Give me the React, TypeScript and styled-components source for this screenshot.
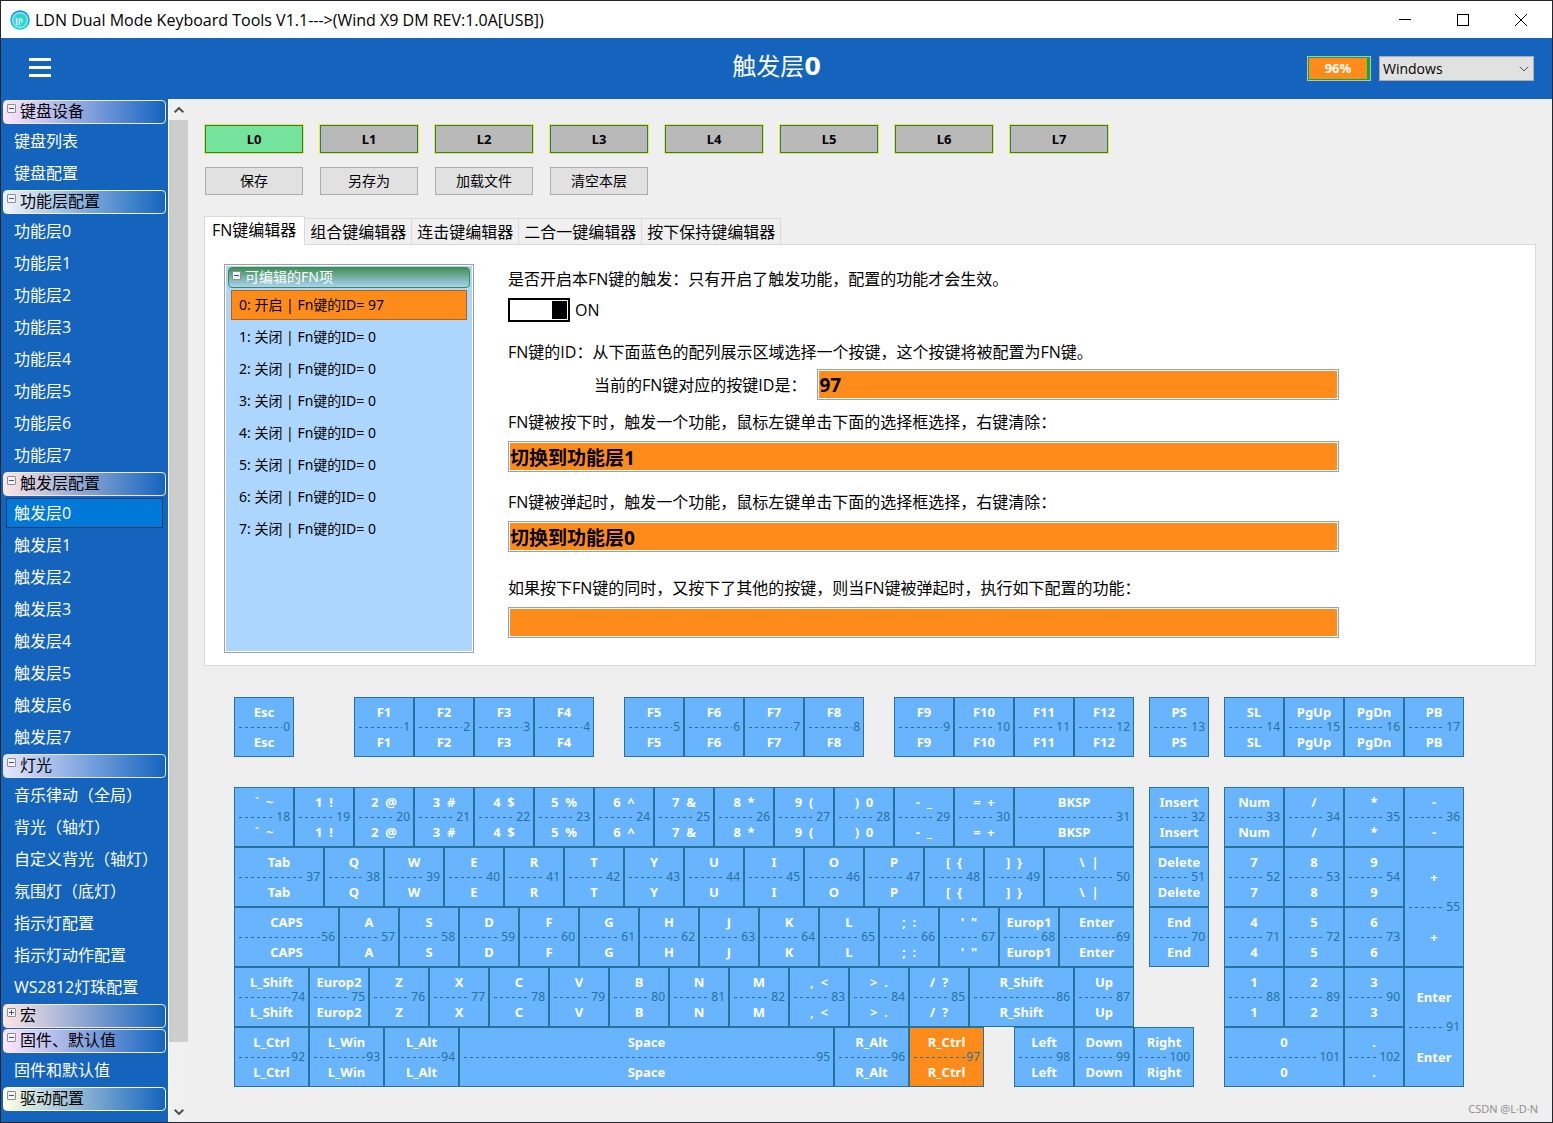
import React, { useState } from "react";
import styled, { createGlobalStyle, css } from "styled-components";

const uiFont = `"Open Sans", "Noto Sans CJK SC", sans-serif`;
const keyFont = `"Noto Sans", "Noto Sans CJK SC", sans-serif`;

const color = {
  blue: "#1464be",
  orange: "#ff8c1a",
  key: "#69b4ff",
  teal: "#23739b",
  face: "#efefef",
};

const GlobalStyle = createGlobalStyle`
  *, *::before, *::after { box-sizing: border-box; }
  body { margin: 0; font: 16px/24px ${uiFont}; color: #000; background: #25252b; }
  button, input, select { font: inherit; color: inherit; margin: 0; border-radius: 0; }
  button { cursor: pointer; padding: 0; }
  ul { list-style: none; margin: 0; padding: 0; }
  p, h1 { margin: 0; }
`;

const Window = styled.div`
  display: flex;
  flex-direction: column;
  height: 100vh;
  border: 1px solid #25252b;
  background: ${color.face};
  overflow: hidden;
`;

const TitleBar = styled.header`
  display: flex;
  align-items: center;
  flex: none;
  height: 37px;
  padding-left: 9px;
  background: #fff;
`;

const WindowTitle = styled.span`
  flex: 1;
  margin-left: 5px;
  font-size: 16px;
  white-space: nowrap;
`;

const WindowButton = styled.button`
  display: grid;
  place-items: center;
  width: 58px;
  height: 36px;
  border: 0;
  background: none;
`;

const WindowButtons = styled.div`
  display: flex;
  padding-right: 2px;
`;

const Toolbar = styled.div`
  display: grid;
  grid-template-columns: 1fr auto 1fr;
  align-items: center;
  flex: none;
  height: 61px;
  padding: 0 18px;
  background: ${color.blue};
  color: #fff;
`;

const MenuButton = styled.button`
  display: flex;
  flex-direction: column;
  gap: 5px;
  width: 22px;
  margin-left: 10px;
  padding-bottom: 2px;
  border: 0;
  background: none;
`;

const MenuBar = styled.span`
  height: 3px;
  background: #fff;
`;

const PageTitle = styled.h1`
  padding-bottom: 4px;
  font-size: 24px;
  line-height: 32px;
  font-weight: 400;

  b {
    font-family: "DejaVu Sans", sans-serif;
    font-weight: 700;
  }
`;

const ToolbarEnd = styled.div`
  display: flex;
  justify-content: flex-end;
  gap: 8px;
`;

const Battery = styled.div`
  width: 64px;
  height: 25px;
  padding: 1px 0 1px 1px;
  border: 1px solid #bcbcbc;
  background: #06b025;
`;

const BatteryLevel = styled.div`
  width: 58px;
  height: 21px;
  background: ${color.orange};
  font: 700 13px/21px ${keyFont};
  text-align: center;
`;

const SelectBox = styled.div`
  display: grid;
  align-items: center;
  width: 155px;
  height: 25px;
  border: 1px solid #adadad;
  background: #e1e1e1;
  color: #000;

  > * { grid-area: 1 / 1; }

  svg {
    justify-self: end;
    margin-right: 4px;
    pointer-events: none;
  }
`;

const Select = styled.select`
  appearance: none;
  width: 100%;
  height: 23px;
  padding: 0 3px;
  border: 0;
  background: none;
  font-size: 14px;
  line-height: 20px;
`;

const Body = styled.div`
  display: flex;
  flex: 1;
  min-height: 0;
`;

const Sidebar = styled.nav`
  flex: none;
  width: 167px;
  overflow: hidden;
  background: ${color.blue};
`;

const GroupButton = styled.button<{ $tint: string }>`
  display: flex;
  align-items: center;
  gap: 4px;
  width: 163px;
  height: 24px;
  margin: 1px 2px 0;
  padding: 0 3px 2px;
  border: 1px solid ${(p) => p.$tint};
  border-radius: 4px;
  background: linear-gradient(90deg, ${(p) => p.$tint}, ${color.blue});
  line-height: 20px;
  white-space: nowrap;
`;

const GroupList = styled.ul`
  padding-top: 1px;
`;

const NavButton = styled.button<{ $active: boolean }>`
  display: block;
  width: 157px;
  height: 30px;
  margin: 1px 5px;
  padding: 0 7px;
  border: 1px solid ${(p) => (p.$active ? "#0c3c70" : "transparent")};
  background: ${(p) => (p.$active ? "#0078d7" : "none")};
  color: #fff;
  font-size: 16px;
  line-height: 28px;
  text-align: left;
  white-space: nowrap;
`;

const NavItem = styled.li`
  display: flex;
`;

const ScrollBar = styled.div`
  display: flex;
  flex-direction: column;
  flex: none;
  width: 20px;
  border-left: 1px solid #fff;
  background: #f0f0f0;
`;

const ScrollButton = styled.button`
  display: grid;
  place-items: center;
  flex: none;
  height: 21px;
  border: 0;
  background: none;
`;

const ScrollTrack = styled.div`
  flex: 1;
`;

const ScrollThumb = styled.div`
  height: 94%;
  background: #cdcdcd;
`;

const Main = styled.main`
  display: flex;
  flex-direction: column;
  flex: 1;
  min-width: 0;
  padding: 25px 16px 0;
`;

const ButtonRow = styled.div`
  display: flex;
  gap: 15px;
  margin-bottom: 12px;
`;

const LayerButton = styled.button<{ $active: boolean }>`
  width: 100px;
  height: 30px;
  border: 1px solid #f0f000;
  outline: 1px solid ${color.teal};
  outline-offset: -2px;
  background: ${(p) => (p.$active ? "#75e39b" : "#b9b9b9")};
  font: 700 13px/20px ${keyFont};
`;

const ActionButton = styled.button`
  width: 98px;
  height: 28px;
  margin: 1px;
  border: 1px solid #adadad;
  background: #e1e1e1;
  font-size: 14px;
  line-height: 20px;
`;

const TabList = styled.div`
  display: flex;
  align-items: flex-end;
  height: 29px;
  margin: 8px 0 -1px;
  z-index: 1;
`;

const Tab = styled.button<{ $active: boolean }>`
  height: 27px;
  padding: 0 5px;
  border: 1px solid #d9d9d9;
  border-left-width: 0;
  background: #f0f0f0;
  line-height: 24px;
  white-space: nowrap;
  ${(p) =>
    p.$active &&
    css`
      height: 29px;
      padding: 0 8px 2px 7px;
      border-left-width: 1px;
      border-bottom-color: #fff;
      background: #fff;
    `}
`;

const Panel = styled.section`
  display: flex;
  gap: 34px;
  padding: 19px 19px 12px;
  border: 1px solid #d9d9d9;
  background: #fff;
`;

const ListFrame = styled.div`
  flex: none;
  width: 250px;
  height: 389px;
  padding: 1px 2px;
  border: 1px solid #a0a0a0;
  background: #add6ff;
  box-shadow: inset 0 0 0 1px #fff;
`;

const ListHeader = styled.button`
  display: flex;
  align-items: center;
  gap: 4px;
  width: 242px;
  height: 21px;
  margin: 1px;
  padding: 0 3px 2px;
  border: 1px solid #3c8c50;
  border-radius: 4px;
  background: linear-gradient(#439056, #a9d2f4);
  color: #fff;
  font: 14px/18px ${keyFont};
`;

const ListItem = styled.button<{ $active: boolean }>`
  display: block;
  width: 236px;
  height: 30px;
  margin: 1px 4px;
  padding: 0 7px;
  border: 1px solid ${(p) => (p.$active ? "#b4640f" : "transparent")};
  background: ${(p) => (p.$active ? color.orange : "none")};
  font: 14px/28px ${keyFont};
  text-align: left;
`;

const Form = styled.form`
  flex: 0 1 831px;
  min-width: 0;
  padding-top: 3px;
`;

const Text = styled.label`
  display: block;
  line-height: 24px;
  white-space: nowrap;
`;

const SwitchRow = styled.label`
  display: flex;
  align-items: center;
  gap: 5px;
  height: 24px;
  margin: 7px 0 18px;
`;

const Switch = styled.input`
  appearance: none;
  display: flex;
  justify-content: flex-start;
  width: 62px;
  height: 24px;
  padding: 1px;
  border: 2px solid #000;
  background: #fff;

  &::before {
    content: "";
    width: 15px;
    background: #000;
  }
  &:checked { justify-content: flex-end; }
`;

const IdRow = styled.div`
  display: flex;
  align-items: center;
  gap: 11px;
  margin: 5px 0 10px;
  padding-left: 86px;
`;

const Field = styled.input`
  display: block;
  flex: 1;
  width: 100%;
  min-width: 0;
  height: 31px;
  padding: 0 1px;
  border: 1px solid #a0a0a0;
  background: ${color.orange};
  box-shadow: inset 0 0 0 1px #fff;
  font-size: 19px;
  font-weight: 700;
`;

const FieldGroup = styled.div<{ $after: number }>`
  display: grid;
  gap: 7px;
  margin-bottom: ${(p) => p.$after}px;
`;

const Keyboard = styled.div`
  display: grid;
  grid-template-columns: repeat(82, minmax(0, 1fr));
  grid-template-rows: 60px 30px repeat(5, 60px);
  max-width: 1230px;
  margin: 31px 30px 0;
`;

const Key = styled.button<{ $col: number; $span: number; $row: number; $rows: number; $active: boolean }>`
  display: grid;
  grid-template-rows: 1fr 1fr;
  grid-column: ${(p) => p.$col} / span ${(p) => p.$span};
  grid-row: ${(p) => p.$row} / span ${(p) => p.$rows};
  min-width: 0;
  border: 0;
  background: ${(p) => (p.$active ? color.orange : color.key)};
  box-shadow: inset 0 0 0 1px ${color.teal};
  color: #fff;
  font: 700 13px/16px ${keyFont};
  white-space: pre;
`;

const KeyLegend = styled.span<{ $half: 1 | 2 }>`
  grid-area: ${(p) => p.$half} / 1;
  place-self: center;
`;

const KeyRule = styled.span`
  display: flex;
  align-items: center;
  align-self: center;
  grid-area: 1 / 1 / 3 / 2;
  margin: 0 4px 0 5px;
  color: ${color.teal};
  font-size: 12px;
  font-weight: 400;
  line-height: 14px;

  &::before {
    content: "";
    flex: 1;
    height: 1px;
    margin-right: 1px;
    background: repeating-linear-gradient(90deg, ${color.teal} 0 3px, transparent 3px 6px);
  }
`;

const Credit = styled.footer`
  margin: auto -2px 4px auto;
  color: #8c8c8c;
  font-size: 11px;
  line-height: 18px;
`;

const ToggleMark = ({ open }: { open: boolean }) => (
  <svg width="9" height="9" viewBox="0 0 9 9" style={{ alignSelf: "flex-start", marginTop: 3 }} aria-hidden="true">
    <rect x="0.5" y="0.5" width="8" height="8" rx="0.5" fill="#f4f4f4" stroke="#8e8f8f" />
    <path d={open ? "M2 4.5h5" : "M2 4.5h5M4.5 2v5"} stroke="#3a50b0" />
  </svg>
);

const Logo = () => (
  <svg width="20" height="20" viewBox="0 0 20 20" aria-hidden="true">
    <defs>
      <linearGradient id="logo" x1="0" y1="0" x2="0" y2="1">
        <stop offset="0" stopColor="#1488f5" />
        <stop offset="1" stopColor="#14d8cd" />
      </linearGradient>
    </defs>
    <circle cx="10" cy="10" r="8.9" fill="#a4f2f4" stroke="url(#logo)" strokeWidth="1.8" />
    <circle cx="10" cy="10" r="7" fill="#4ccdf0" />
    <path d="M5.5 6h8.3v5.5q0 3.4-3.3 3.4" fill="none" stroke="#19e69a" strokeWidth="2.2" />
    <path d="M6.7 8v7M9.3 15V9.2h2.6V13" fill="none" stroke="#e2ffff" strokeWidth="1.1" />
  </svg>
);

const Chevron = ({ up = false, size = 10, weight = 2 }: { up?: boolean; size?: number; weight?: number }) => (
  <svg width={size} height={size * 0.6} viewBox="0 0 10 6" aria-hidden="true">
    <path d={up ? "M0.7 5.3L5 1l4.3 4.3" : "M0.7 0.7L5 5l4.3-4.3"} fill="none" stroke="#505050" strokeWidth={weight} />
  </svg>
);

const numbered = (name: string) => Array.from({ length: 8 }, (_, i) => `${name}${i}`);

const groups = [
  { name: "键盘设备", tint: "#ffe6ff", items: ["键盘列表", "键盘配置"] },
  { name: "功能层配置", tint: "#f0f5fa", items: numbered("功能层") },
  { name: "触发层配置", tint: "#ffe6e6", items: numbered("触发层") },
  {
    name: "灯光",
    tint: "#e6e6ff",
    items: ["音乐律动（全局）", "背光（轴灯）", "自定义背光（轴灯）", "氛围灯（底灯）", "指示灯配置", "指示灯动作配置", "WS2812灯珠配置"],
  },
  { name: "宏", tint: "#ffe6e6", items: [] },
  { name: "固件、默认值", tint: "#ffe6ff", items: ["固件和默认值"] },
  { name: "驱动配置", tint: "#ffffe6", items: [] },
];

const tabs = ["FN键编辑器", "组合键编辑器", "连击键编辑器", "二合一键编辑器", "按下保持键编辑器"];

/* A key is [legend, width, gap before it, rows]; widths and gaps count quarter keys. */
type KeySpec = [string, number?, number?, number?];

const keyRows: { row: number; keys: KeySpec[] }[] = [
  {
    row: 1,
    keys: [
      ["Esc"], ["F1", 4, 4], ["F2"], ["F3"], ["F4"], ["F5", 4, 2], ["F6"], ["F7"], ["F8"],
      ["F9", 4, 2], ["F10"], ["F11"], ["F12"], ["PS", 4, 1], ["SL", 4, 1], ["PgUp"], ["PgDn"], ["PB"],
    ],
  },
  {
    row: 3,
    keys: [
      ["`  ~"], ["1  !"], ["2  @"], ["3  #"], ["4  $"], ["5  %"], ["6  ^"], ["7  &"], ["8  *"], ["9  ("], [")  0"],
      ["-  _"], ["=  +"], ["BKSP", 8], ["Insert", 4, 1], ["Num", 4, 1], ["/"], ["*"], ["-"],
    ],
  },
  {
    row: 4,
    keys: [
      ["Tab", 6], ["Q"], ["W"], ["E"], ["R"], ["T"], ["Y"], ["U"], ["I"], ["O"], ["P"], ["[  {"], ["]  }"],
      ["\\  |", 6], ["Delete", 4, 1], ["7", 4, 1], ["8"], ["9"], ["+", 4, 0, 2],
    ],
  },
  {
    row: 5,
    keys: [
      ["CAPS", 7], ["A"], ["S"], ["D"], ["F"], ["G"], ["H"], ["J"], ["K"], ["L"], [";  :"], ["'  \""],
      ["Europ1"], ["Enter", 5], ["End", 4, 1], ["4", 4, 1], ["5"], ["6"],
    ],
  },
  {
    row: 6,
    keys: [
      ["L_Shift", 5], ["Europ2"], ["Z"], ["X"], ["C"], ["V"], ["B"], ["N"], ["M"], [",  <"], [">  ."], ["/  ?"],
      ["R_Shift", 7], ["Up"], ["1", 4, 6], ["2"], ["3"], ["Enter", 4, 0, 2],
    ],
  },
  {
    row: 7,
    keys: [
      ["L_Ctrl", 5], ["L_Win", 5], ["L_Alt", 5], ["Space", 25], ["R_Alt", 5], ["R_Ctrl", 5],
      ["Left", 4, 2], ["Down"], ["Right"], ["0", 8, 2], ["."],
    ],
  },
];

const keys = keyRows
  .flatMap(({ row, keys: specs }) => {
    let next = 1;
    return specs.map(([legend, span = 4, gap = 0, rows = 1]) => {
      const col = next + gap;
      next = col + span;
      return { legend, span, col, row, rows };
    });
  })
  .map((key, id) => ({ ...key, id }));

export default function App() {
  const [layer, setLayer] = useState(0);
  const [tab, setTab] = useState(0);
  const [page, setPage] = useState("触发层0");
  const [item, setItem] = useState(0);
  const [on, setOn] = useState(true);
  const [keyId, setKeyId] = useState(97);

  return (
    <Window>
      <GlobalStyle />
      <TitleBar>
        <Logo />
        <WindowTitle>LDN Dual Mode Keyboard Tools V1.1---&gt;(Wind X9 DM REV:1.0A[USB])</WindowTitle>
        <WindowButtons>
          <WindowButton aria-label="Minimize">
            <svg width="12" height="12"><path d="M0 5.5h12" stroke="#000" /></svg>
          </WindowButton>
          <WindowButton aria-label="Maximize">
            <svg width="12" height="12"><rect x="0.5" y="0.5" width="11" height="11" fill="none" stroke="#000" /></svg>
          </WindowButton>
          <WindowButton aria-label="Close">
            <svg width="12" height="12"><path d="M0 0l12 12M12 0L0 12" stroke="#000" /></svg>
          </WindowButton>
        </WindowButtons>
      </TitleBar>

      <Toolbar>
        <MenuButton aria-label="Menu">
          <MenuBar /><MenuBar /><MenuBar />
        </MenuButton>
        <PageTitle>触发层<b>0</b></PageTitle>
        <ToolbarEnd>
          <Battery>
            <BatteryLevel>96%</BatteryLevel>
          </Battery>
          <SelectBox>
            <Select aria-label="System" defaultValue="Windows">
              <option>Windows</option>
            </Select>
            <Chevron weight={1} />
          </SelectBox>
        </ToolbarEnd>
      </Toolbar>

      <Body>
        <Sidebar>
          {groups.map((group) => (
            <React.Fragment key={group.name}>
              <GroupButton $tint={group.tint}>
                <ToggleMark open={group.name !== "宏"} />
                {group.name}
              </GroupButton>
              {group.items.length > 0 && (
                <GroupList>
                  {group.items.map((name) => (
                    <NavItem key={name}>
                      <NavButton $active={name === page} onClick={() => setPage(name)}>{name}</NavButton>
                    </NavItem>
                  ))}
                </GroupList>
              )}
            </React.Fragment>
          ))}
        </Sidebar>
        <ScrollBar>
          <ScrollButton aria-label="Scroll up"><Chevron up /></ScrollButton>
          <ScrollTrack><ScrollThumb /></ScrollTrack>
          <ScrollButton aria-label="Scroll down"><Chevron /></ScrollButton>
        </ScrollBar>

        <Main>
          <ButtonRow>
            {Array.from({ length: 8 }, (_, i) => (
              <LayerButton key={i} $active={i === layer} onClick={() => setLayer(i)}>L{i}</LayerButton>
            ))}
          </ButtonRow>
          <ButtonRow>
            {["保存", "另存为", "加载文件", "清空本层"].map((name) => (
              <ActionButton key={name}>{name}</ActionButton>
            ))}
          </ButtonRow>

          <TabList role="tablist">
            {tabs.map((name, i) => (
              <Tab key={name} role="tab" aria-selected={i === tab} $active={i === tab} onClick={() => setTab(i)}>
                {name}
              </Tab>
            ))}
          </TabList>
          <Panel>
            <ListFrame>
              <ListHeader><ToggleMark open />可编辑的FN项</ListHeader>
              <ul>
                {Array.from({ length: 8 }, (_, i) => (
                  <NavItem key={i}>
                    <ListItem $active={i === item} onClick={() => setItem(i)}>
                      {i}: {i === 0 ? "开启" : "关闭"} | Fn键的ID= {i === 0 ? keyId : 0}
                    </ListItem>
                  </NavItem>
                ))}
              </ul>
            </ListFrame>
            <Form onSubmit={(e) => e.preventDefault()}>
              <Text htmlFor="fn-on">是否开启本FN键的触发：只有开启了触发功能，配置的功能才会生效。</Text>
              <SwitchRow>
                <Switch id="fn-on" type="checkbox" role="switch" checked={on} onChange={() => setOn(!on)} />
                {on ? "ON" : "OFF"}
              </SwitchRow>
              <Text as="p">FN键的ID：从下面蓝色的配列展示区域选择一个按键，这个按键将被配置为FN键。</Text>
              <IdRow>
                <Text htmlFor="fn-id">当前的FN键对应的按键ID是：</Text>
                <Field id="fn-id" readOnly value={keyId} />
              </IdRow>
              <FieldGroup $after={18}>
                <Text htmlFor="fn-down">FN键被按下时，触发一个功能，鼠标左键单击下面的选择框选择，右键清除：</Text>
                <Field id="fn-down" readOnly value="切换到功能层1" />
              </FieldGroup>
              <FieldGroup $after={24}>
                <Text htmlFor="fn-up">FN键被弹起时，触发一个功能，鼠标左键单击下面的选择框选择，右键清除：</Text>
                <Field id="fn-up" readOnly value="切换到功能层0" />
              </FieldGroup>
              <FieldGroup $after={0}>
                <Text htmlFor="fn-mixed">如果按下FN键的同时，又按下了其他的按键，则当FN键被弹起时，执行如下配置的功能：</Text>
                <Field id="fn-mixed" readOnly value="" />
              </FieldGroup>
            </Form>
          </Panel>

          <Keyboard>
            {keys.map((k) => (
              <Key
                key={k.id}
                $col={k.col}
                $span={k.span}
                $row={k.row}
                $rows={k.rows}
                $active={k.id === keyId}
                onClick={() => setKeyId(k.id)}
              >
                <KeyLegend $half={1}>{k.legend}</KeyLegend>
                <KeyRule>{k.id}</KeyRule>
                <KeyLegend $half={2}>{k.legend}</KeyLegend>
              </Key>
            ))}
          </Keyboard>
          <Credit>CSDN @L·D·N</Credit>
        </Main>
      </Body>
    </Window>
  );
}
